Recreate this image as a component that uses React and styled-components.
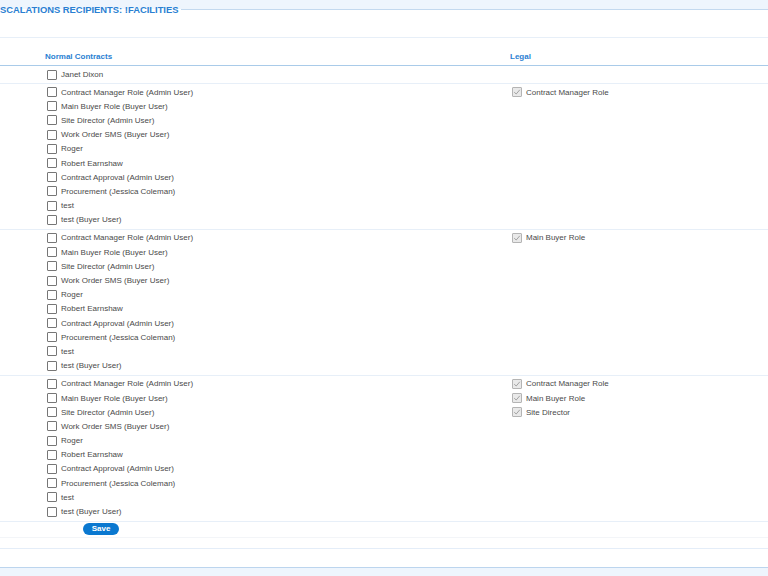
import React from 'react'
import styled, { createGlobalStyle } from 'styled-components'

const GlobalStyle = createGlobalStyle`
  html, body { margin: 0; padding: 0; background: #fff; }
  body { font-family: "Liberation Sans", Arial, sans-serif; }
`

const people = [
  'Contract Manager Role (Admin User)',
  'Main Buyer Role (Buyer User)',
  'Site Director (Admin User)',
  'Work Order SMS (Buyer User)',
  'Roger',
  'Robert Earnshaw',
  'Contract Approval (Admin User)',
  'Procurement (Jessica Coleman)',
  'test',
  'test (Buyer User)',
]

const groups = [
  ['Contract Manager Role'],
  ['Main Buyer Role'],
  ['Contract Manager Role', 'Main Buyer Role', 'Site Director'],
]

const Check = ({ checked }) => (
  <Box checked={checked}>
    {checked && (
      <svg width="8" height="8" viewBox="0 0 8 8">
        <path d="M1.2 4.2 L3.2 6 L6.8 1.8" fill="none" stroke="#9a9a9a" strokeWidth="0.9" />
      </svg>
    )}
  </Box>
)

const App = () => {
  return (
    <Page>
      <GlobalStyle />
      <Legend>
        <Title>SCALATIONS RECIPIENTS: !FACILITIES</Title>
        <Rule />
      </Legend>
      <Spacer />

      <HeaderRow>
        <HeadCell>Normal Contracts</HeadCell>
        <HeadCell>Legal</HeadCell>
      </HeaderRow>

      <SingleRow>
        <Item>
          <Check />
          <Label>Janet Dixon</Label>
        </Item>
        <div />
      </SingleRow>

      {groups.map((legal, gi) => (
        <Group key={gi}>
          <Column>
            {people.map((p) => (
              <Item key={p}>
                <Check />
                <Label>{p}</Label>
              </Item>
            ))}
          </Column>
          <Column>
            {legal.map((l) => (
              <Item key={l}>
                <Check checked />
                <Label>{l}</Label>
              </Item>
            ))}
          </Column>
        </Group>
      ))}

      <SaveRow>
        <SaveButton>Save</SaveButton>
      </SaveRow>
      <EmptyRow />
      <FooterGap />
      <Bottom />
    </Page>
  )
}

const Page = styled.div`
  width: 768px;
  height: 576px;
  overflow: hidden;
  background: #fff;
`

const Legend = styled.div`
  display: flex;
  height: 18px;
  background: linear-gradient(to bottom, #eef5fd 0, #eef5fd 9px, #fff 9px);
`

const Title = styled.div`
  font-size: 9.4px;
  font-weight: bold;
  color: #2a7fd2;
  line-height: 19px;
  white-space: nowrap;
`

const Rule = styled.div`
  flex: 1;
  height: 1px;
  margin: 9px 0 0 3px;
  background: #c3d9ef;
`

const Spacer = styled.div`
  height: 19px;
  border-bottom: 1px solid #e7eff8;
`

const HeaderRow = styled.div`
  display: grid;
  grid-template-columns: 465px 1fr;
  padding-left: 45px;
  height: 27px;
  align-items: end;
  border-bottom: 1px solid #a9cbe9;
`

const HeadCell = styled.div`
  font-size: 8px;
  font-weight: bold;
  color: #2a7fd2;
  line-height: 10px;
  padding-bottom: 3px;
`

const SingleRow = styled.div`
  display: grid;
  grid-template-columns: 465px 1fr;
  padding-left: 45px;
  height: 17px;
  align-items: center;
  border-bottom: 1px solid #e7eff8;
`

const Group = styled.div`
  display: grid;
  grid-template-columns: 465px 1fr;
  padding: 1px 0 2px 45px;
  border-bottom: 1px solid #e7eff8;
`

const Column = styled.div`
  display: flex;
  flex-direction: column;
`

const Item = styled.div`
  display: flex;
  align-items: center;
  height: 14.2px;
  padding-left: 2px;
`

const Box = styled.span`
  box-sizing: border-box;
  width: 10px;
  height: 10px;
  border: 1px solid ${(p) => (p.checked ? '#b4b4b4' : '#767676')};
  background: ${(p) => (p.checked ? '#e9e9e9' : '#fff')};
  border-radius: 1px;
  display: flex;
  align-items: center;
  justify-content: center;
  flex-shrink: 0;
`

const Label = styled.span`
  font-size: 8px;
  color: #4a4a4a;
  margin-left: 4px;
  white-space: nowrap;
`

const SaveRow = styled.div`
  height: 15px;
  display: flex;
  align-items: center;
  padding-left: 83px;
  border-bottom: 1px solid #f3f5f8;
`

const SaveButton = styled.button`
  width: 36px;
  height: 12px;
  padding: 0;
  border: none;
  border-radius: 6px;
  background: #0a78d0;
  color: #fff;
  font-family: "Liberation Sans", Arial, sans-serif;
  font-size: 8px;
  font-weight: bold;
  line-height: 12px;
  cursor: pointer;
`

const EmptyRow = styled.div`
  height: 10px;
  border-bottom: 1px solid #e4edf8;
`

const FooterGap = styled.div`
  height: 18px;
  border-bottom: 1px solid #bcd5ee;
`

const Bottom = styled.div`
  height: 20px;
  background: #eef5fd;
`

export default App
